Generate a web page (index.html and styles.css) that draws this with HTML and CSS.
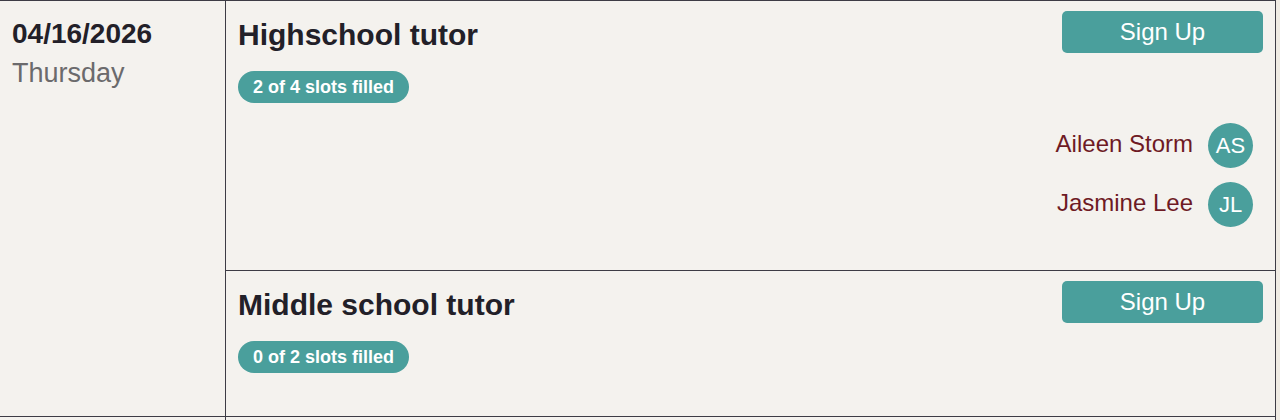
FILE: index.html
```html
<!DOCTYPE html>
<html lang="en">
<head>
<meta charset="utf-8">
<title>Schedule</title>
<link rel="stylesheet" href="styles.css">
</head>
<body>
<div class="schedule">
  <div class="day">
    <div class="date-cell">
      <div class="date">04/16/2026</div>
      <div class="weekday">Thursday</div>
    </div>
    <div class="slots">
      <div class="slot">
        <div class="slot-head">
          <h2 class="slot-title">Highschool tutor</h2>
          <button class="signup">Sign Up</button>
        </div>
        <span class="badge">2 of 4 slots filled</span>
        <ul class="attendees">
          <li class="attendee"><span class="name">Aileen Storm</span><span class="avatar">AS</span></li>
          <li class="attendee"><span class="name">Jasmine Lee</span><span class="avatar">JL</span></li>
        </ul>
      </div>
      <div class="slot">
        <div class="slot-head">
          <h2 class="slot-title">Middle school tutor</h2>
          <button class="signup">Sign Up</button>
        </div>
        <span class="badge">0 of 2 slots filled</span>
      </div>
    </div>
  </div>
  <div class="day day-next">
    <div class="date-cell"></div>
    <div class="slots"><div class="slot slot-empty"></div></div>
  </div>
</div>
</body>
</html>
```
FILE: styles.css
```css
* { box-sizing: border-box; }
html, body { margin: 0; padding: 0; }
body {
  background: #efebe3;
  font-family: "Liberation Sans", Arial, Helvetica, sans-serif;
  color: #222028;
}
.schedule {
  width: 1276px;
  background: #f4f2ee;
  border-top: 1px solid #3d3c45;
  border-right: 1px solid #3d3c45;
}
.day {
  display: grid;
  grid-template-columns: 226px 1fr;
}
.date-cell {
  border-right: 1px solid #3d3c45;
  border-bottom: 1px solid #3d3c45;
  padding: 14px 12px 0 12px;
}
.date {
  font-size: 28px;
  font-weight: 700;
  line-height: 38px;
  color: #222028;
}
.weekday {
  font-size: 27px;
  line-height: 38px;
  margin-top: 1px;
  color: #6b6a6c;
}
.slots {
  display: flex;
  flex-direction: column;
}
.slot {
  border-bottom: 1px solid #3d3c45;
  padding: 10px 12px 43px 12px;
  display: flex;
  flex-direction: column;
  align-items: flex-start;
}
.slot-head {
  width: 100%;
  display: flex;
  justify-content: space-between;
  align-items: flex-start;
}
.slot-title {
  margin: 7px 0 0 0;
  font-size: 30px;
  line-height: 34px;
  font-weight: 700;
  color: #222028;
}
.signup {
  width: 201px;
  height: 42px;
  border: 0;
  border-radius: 5px;
  background: #4a9f9c;
  color: #ffffff;
  font-family: "Liberation Sans", Arial, Helvetica, sans-serif;
  font-size: 24px;
  padding: 0;
  cursor: pointer;
}
.badge {
  margin-top: 18px;
  height: 32px;
  line-height: 32px;
  padding: 0 15px;
  border-radius: 16px;
  background: #4a9f9c;
  color: #ffffff;
  font-size: 18px;
  font-weight: 700;
}
.attendees {
  list-style: none;
  margin: 20px 0 0 0;
  padding: 0 10px 0 0;
  align-self: stretch;
  display: flex;
  flex-direction: column;
  align-items: flex-end;
  gap: 14px;
}
.attendee {
  display: flex;
  align-items: center;
  gap: 15px;
}
.name {
  font-size: 24px;
  line-height: 28px;
  margin-bottom: 4px;
  color: #6e1a24;
}
.avatar {
  width: 45px;
  height: 45px;
  border-radius: 50%;
  background: #4a9f9c;
  color: #ffffff;
  font-size: 22px;
  display: flex;
  align-items: center;
  justify-content: center;
}
.slot-empty {
  height: 120px;
}
```
